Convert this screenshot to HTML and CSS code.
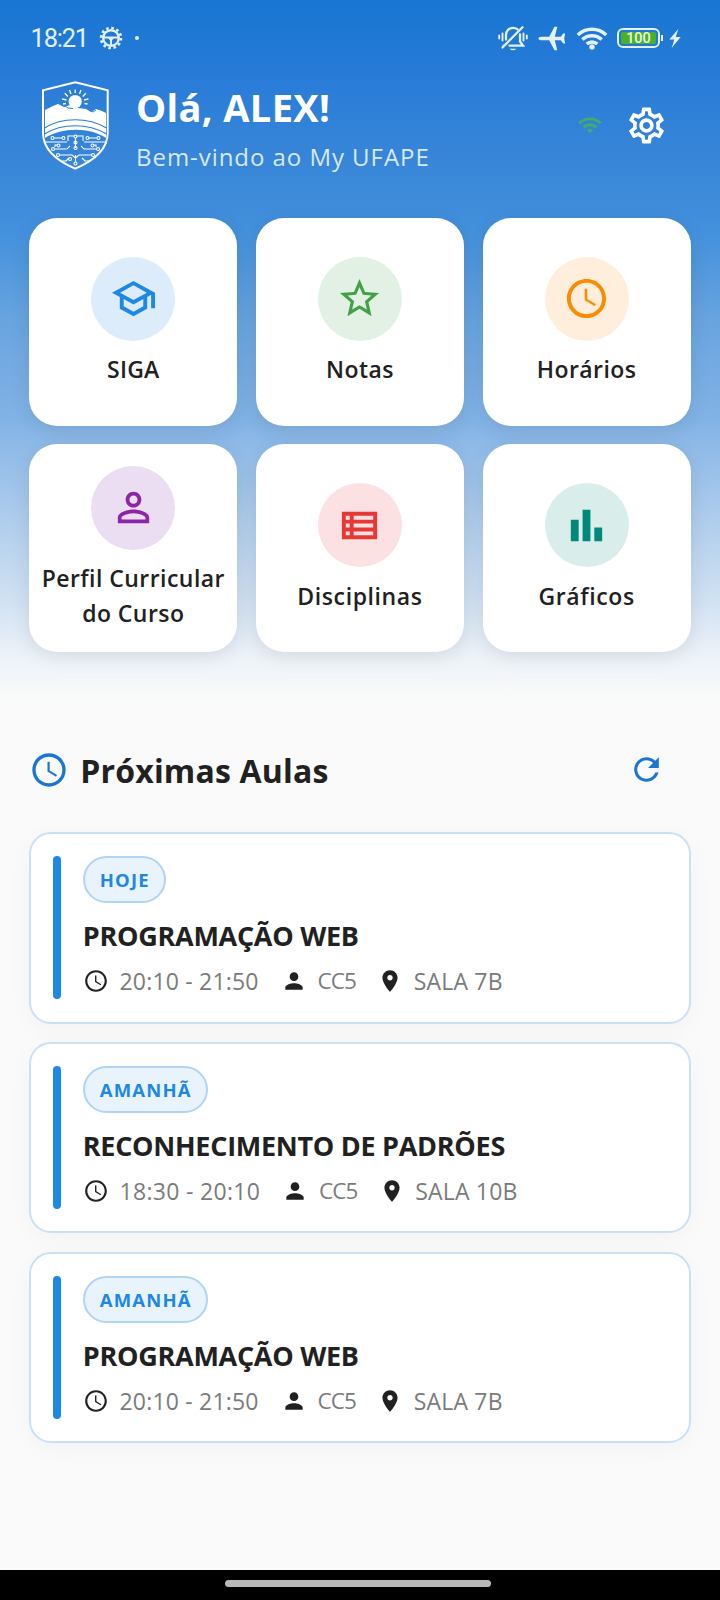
FILE: index.html
```
<!DOCTYPE html>
<html lang="pt-BR">
<head>
<meta charset="utf-8">
<title>My UFAPE</title>
<link rel="stylesheet" href="styles.css">
</head>
<body>
<svg class="defs" aria-hidden="true">
  <symbol id="i-clock" viewBox="0 0 24 24"><path d="M11.99 2C6.47 2 2 6.48 2 12s4.47 10 9.99 10C17.52 22 22 17.52 22 12S17.52 2 11.99 2zM12 20c-4.42 0-8-3.58-8-8s3.580-8 8-8 8 3.580 8 8-3.580 8-8 8zM12.400 7H11.100v5.900l5.100 3.100.65-1.050-4.450-2.650z"/></symbol>
  <symbol id="i-person" viewBox="0 0 24 24"><path d="M12 12c2.21 0 4-1.79 4-4s-1.79-4-4-4-4 1.79-4 4 1.79 4 4 4zm0 2c-2.67 0-8 1.34-8 4v2h16v-2c0-2.66-5.33-4-8-4z"/></symbol>
  <symbol id="i-place" viewBox="0 0 24 24"><path d="M12 2C8.13 2 5 5.13 5 9c0 5.25 7 13 7 13s7-7.75 7-13c0-3.87-3.13-7-7-7zm0 9.5c-1.38 0-2.5-1.12-2.5-2.5s1.12-2.5 2.5-2.5 2.5 1.12 2.5 2.5-1.12 2.5-2.5 2.5z"/></symbol>
</svg>
<div class="screen">
  <div class="hero">
    <div class="status">
      <span class="time">18:21</span>
      <svg class="s-cog" viewBox="0 0 24 24"><circle cx="12" cy="12" r="7.8" fill="none" stroke="currentColor" stroke-width="2.400"/><circle cx="12" cy="12" r="10" fill="none" stroke="currentColor" stroke-width="2.600" stroke-dasharray="2.600 2.636"/><path d="M4.5 11.400h15M12 12v8" stroke="currentColor" stroke-width="2" fill="none"/><path d="M9 12h6L12 15.500z" fill="currentColor"/></svg>
      <span class="dot"></span>
      <span class="grow"></span>
      <svg class="s-bell" viewBox="0 0 30 26" fill="none" stroke="currentColor" stroke-width="2.300" stroke-linecap="round"><path d="M8 14.500V10c0-4 3-7.200 7-7.200 1.800 0 3.200.5 4.300 1.400M22 9.500v7l3 4.200H11.500M5.500 20.700h.6M4.500 22.500L24.500 2.300"/><path d="M11.500 23.700q3.500 3.200 7 0z" fill="currentColor" stroke="none"/><path d="M1.200 10.500v3M4.500 8.500v7M25.500 8.500v7M28.800 10.500v3" stroke-width="1.900"/></svg>
      <svg class="s-plane" viewBox="0 0 28 25" fill="currentColor"><path d="M.5 12.500c0-1 1-1.700 2.500-1.700h8.200L16.500.8h2.800l-2.500 10h6L25.200 7.500h2l-1 5 1 5h-2l-2.400-3.300h-6l2.500 10h-2.800L11.200 14.200H3c-1.500 0-2.500-.7-2.500-1.700z"/></svg>
      <svg class="s-wifi" viewBox="0 0 32 24" fill="none" stroke="currentColor" stroke-width="3.500"><path d="M1.800 9a20.500 20.500 0 0 1 28.400 0M6.300 13.600a14 14 0 0 1 19.400 0M10.700 18a7.800 7.800 0 0 1 10.600 0"/><circle cx="16" cy="21" r="2.700" fill="currentColor" stroke="none"/></svg>
      <span class="battery"><span class="level">100</span></span>
      <svg class="s-bolt" viewBox="0 0 12 20" fill="currentColor"><path d="M9.500 0L0 11h5.200L2.500 20 12 8.500H6.800z"/></svg>
    </div>
    <header class="header">
      <svg class="logo" viewBox="0 0 67 89" fill="none" stroke="#fff">
        <path d="M33.200 1.200L65.700 9.300V52C65.700 70 50 80.500 33.200 87.700 16.500 80.500 1 70 1 52V9.300z" stroke-width="2"/>
        <path d="M3 29l8-4 5-2 6 3 6-2 8 3 8 1 5 3 5-3 6 2 4 2v25C48 46 20 46 3 57z" fill="#fff" stroke="none"/>
        <circle cx="33.200" cy="20.500" r="6.600" fill="#fff" stroke="none"/>
        <path d="M33.200 12V8.500M29 13l-1.500-4M37.500 13l1.500-4M25.800 15.500l-3-3.200M40.800 15.500l3-3.200M24.500 19l-4.500-1.200M42 19l4.500-1.200M24 22.500l-3 .5M42.500 22.500l3 .5" stroke-width="1.300"/>
        <path d="M2.500 47C20 36 46 36 64.500 47M2.500 53C20 42 46 42 64.500 53" stroke="#2c7fd8" stroke-width="1.200"/>
        <path d="M22 24l4 3 5 .5M47 29l4 2 3-2" stroke="#2c7fd8" stroke-width="1"/>
        <g stroke-width="1.100"><path d="M12 57h8M47 57h8M26 60v-5h6M41 60v-5h-7M3 61h22M42 61h22M33.500 57v10M13 66v-2h2M54 66v-2h-2M13 68h12l3-3M54 68H42l-3-3M18 74h12l3.500 3M49 74H37l-3.500 3M20 80h4l3-3M47 80h-4l-3-3M33.500 74v7"/><circle cx="10.500" cy="57" r="1.500"/><circle cx="21.500" cy="57" r="1.500"/><circle cx="45.500" cy="57" r="1.500"/><circle cx="56.500" cy="57" r="1.500"/><circle cx="33.500" cy="55.500" r="1.500"/><circle cx="33.500" cy="61.500" r="1.500"/><circle cx="33.500" cy="67" r="1.500"/><circle cx="16.500" cy="64.500" r="1.500"/><circle cx="50.500" cy="64.500" r="1.500"/><circle cx="11" cy="68" r="1.500"/><circle cx="56" cy="68" r="1.500"/><circle cx="16" cy="74" r="1.500"/><circle cx="51" cy="74" r="1.500"/><circle cx="28" cy="78" r="1.500"/><circle cx="33.500" cy="82.500" r="1.500"/></g>
      </svg>
      <div class="greet">
        <h1 class="hello">Olá, ALEX!</h1>
        <p class="welcome">Bem-vindo ao My UFAPE</p>
      </div>
      <svg class="online" viewBox="0 0 24 17" fill="none" stroke="#43ab6c" stroke-width="2.900"><path d="M1.200 6.300a15.500 15.500 0 0 1 21.600 0M5.500 10.400a9.400 9.400 0 0 1 13 0"/><path d="M8.800 13.200a4.700 4.700 0 0 1 6.400 0L12 16.600z" fill="#43ab6c" stroke="none"/></svg>
      <svg class="gear" viewBox="0 0 24 24" fill="#fff"><path d="M19.430 12.980c.04-.32.07-.64.07-.98 0-.34-.03-.66-.07-.98l2.110-1.650c.19-.15.24-.42.12-.64l-2-3.460c-.09-.16-.26-.25-.44-.25-.06 0-.12.01-.17.03l-2.490 1c-.52-.4-1.080-.73-1.690-.98l-.38-2.650C14.460 2.180 14.250 2 14 2h-4c-.25 0-.46.18-.49.42l-.38 2.650c-.61.25-1.170.59-1.690.98l-2.490-1c-.06-.02-.12-.03-.18-.03-.17 0-.34.09-.43.25l-2 3.460c-.13.22-.07.49.12.64l2.110 1.650c-.04.32-.07.65-.07.98 0 .33.03.66.07.98l-2.110 1.650c-.19.15-.24.42-.12.64l2 3.460c.09.16.26.25.44.25.06 0 .12-.01.17-.03l2.490-1c.52.4 1.080.73 1.690.98l.38 2.650c.03.24.24.42.49.42h4c.25 0 .46-.18.49-.42l.38-2.650c.61-.25 1.170-.59 1.690-.98l2.490 1c.06.02.12.03.18.03.17 0 .34-.09.43-.25l2-3.460c.12-.22.07-.49-.12-.64l-2.110-1.650zm-1.980-1.710c.04.31.05.52.05.73 0 .21-.02.43-.05.73l-.14 1.130.89.7 1.080.84-.7 1.210-1.270-.51-1.040-.42-.9.68c-.43.32-.84.56-1.250.73l-1.060.43-.16 1.130-.2 1.350h-1.400l-.19-1.350-.16-1.130-1.060-.43c-.43-.18-.83-.41-1.230-.71l-.91-.7-1.060.43-1.270.51-.7-1.210 1.080-.84.89-.7-.14-1.130c-.03-.31-.05-.54-.05-.74s.02-.43.05-.73l.14-1.130-.89-.7-1.080-.84.7-1.210 1.270.51 1.040.42.9-.68c.43-.32.84-.56 1.250-.73l1.060-.43.16-1.130.2-1.350h1.390l.19 1.350.16 1.130 1.060.43c.43.18.83.41 1.230.71l.91.7 1.060-.43 1.270-.51.7 1.210-1.070.85-.89.7.14 1.130zM12 8c-2.210 0-4 1.790-4 4s1.790 4 4 4 4-1.790 4-4-1.790-4-4-4zm0 6c-1.100 0-2-.9-2-2s.9-2 2-2 2 .9 2 2-.9 2-2 2z"/></svg>
    </header>
    <nav class="grid">
      <a class="tile blue"><span class="disc"><svg viewBox="0 0 24 24"><path d="M12 3L1 9l4 2.180v6L12 21l7-3.820v-6l2-1.090V17h2V9L12 3zm6.820 6L12 12.720 5.180 9 12 5.280 18.820 9zM17 15.990l-5 2.730-5-2.730v-3.720L12 15l5-2.730v3.720z"/></svg></span><span class="label">SIGA</span></a>
      <a class="tile green"><span class="disc"><svg viewBox="0 0 24 24"><path d="M22 9.240l-7.190-.62L12 2 9.190 8.630 2 9.240l5.460 4.730L5.820 21 12 17.270 18.180 21l-1.630-7.030L22 9.240zM12 15.400l-3.760 2.270 1-4.280-3.320-2.880 4.380-.38L12 6.100l1.710 4.040 4.380.38-3.320 2.880 1 4.280L12 15.400z"/></svg></span><span class="label">Notas</span></a>
      <a class="tile orange"><span class="disc"><svg><use href="#i-clock"/></svg></span><span class="label">Horários</span></a>
      <a class="tile purple"><span class="disc"><svg viewBox="0 0 24 24"><path d="M12 5.900c1.160 0 2.100.94 2.100 2.100s-.94 2.100-2.100 2.100S9.900 9.160 9.900 8s.94-2.100 2.100-2.100m0 9c2.970 0 6.100 1.460 6.100 2.100v1.100H5.900V17c0-.64 3.130-2.100 6.100-2.100M12 4C9.790 4 8 5.790 8 8s1.790 4 4 4 4-1.790 4-4-1.790-4-4-4zm0 9c-2.670 0-8 1.340-8 4v3h16v-3c0-2.660-5.330-4-8-4z"/></svg></span><span class="label">Perfil Curricular<br>do Curso</span></a>
      <a class="tile red"><span class="disc"><svg viewBox="0 0 24 24"><path fill-rule="evenodd" d="M3 5h18v14H3zM5 7v2h2V7zM9 7v2h10V7zM5 11v2h2v-2zM9 11v2h10v-2zM5 15v2h2v-2zM9 15v2h10v-2z"/></svg></span><span class="label">Disciplinas</span></a>
      <a class="tile teal"><span class="disc"><svg viewBox="0 0 24 24"><path d="M4 9h4v11H4zM16 13h4v7h-4zM10 4h4v16h-4z"/></svg></span><span class="label">Gráficos</span></a>
    </nav>
  </div>
  <main class="classes">
    <div class="section">
      <svg class="sec-clock"><use href="#i-clock"/></svg>
      <h2 class="sec-title">Próximas Aulas</h2>
      <svg class="refresh" viewBox="0 0 24 24"><path d="M17.650 6.350C16.200 4.900 14.210 4 12 4c-4.420 0-7.990 3.580-7.990 8s3.570 8 7.990 8c3.730 0 6.840-2.550 7.730-6h-2.080c-.82 2.330-3.040 4-5.650 4-3.310 0-6-2.690-6-6s2.690-6 6-6c1.660 0 3.140.69 4.220 1.780L13 11h7V4l-2.350 2.350z"/></svg>
    </div>
    <article class="card">
      <span class="bar"></span>
      <div class="info">
        <span class="pill">HOJE</span>
        <h3 class="name">PROGRAMAÇÃO WEB</h3>
        <div class="meta"><span class="item"><svg><use href="#i-clock"/></svg><span class="t-time">20:10 - 21:50</span></span><span class="item"><svg><use href="#i-person"/></svg><span class="t-group">CC5</span></span><span class="item"><svg><use href="#i-place"/></svg><span class="t-room">SALA 7B</span></span></div>
      </div>
    </article>
    <article class="card">
      <span class="bar"></span>
      <div class="info">
        <span class="pill">AMANHÃ</span>
        <h3 class="name">RECONHECIMENTO DE PADRÕES</h3>
        <div class="meta"><span class="item"><svg><use href="#i-clock"/></svg><span class="t-time wide">18:30 - 20:10</span></span><span class="item"><svg><use href="#i-person"/></svg><span class="t-group">CC5</span></span><span class="item"><svg><use href="#i-place"/></svg><span class="t-room">SALA 10B</span></span></div>
      </div>
    </article>
    <article class="card">
      <span class="bar"></span>
      <div class="info">
        <span class="pill">AMANHÃ</span>
        <h3 class="name">PROGRAMAÇÃO WEB</h3>
        <div class="meta"><span class="item"><svg><use href="#i-clock"/></svg><span class="t-time">20:10 - 21:50</span></span><span class="item"><svg><use href="#i-person"/></svg><span class="t-group">CC5</span></span><span class="item"><svg><use href="#i-place"/></svg><span class="t-room">SALA 7B</span></span></div>
      </div>
    </article>
  </main>
  <div class="navbar"><span class="handle"></span></div>
</div>
</body>
</html>
```
FILE: styles.css
```
* { box-sizing: border-box; margin: 0; padding: 0; }
body { font-family: "Open Sans", "Noto Sans", sans-serif; color: #212121; background: #fafafa; }
svg { display: block; flex: none; }
.defs { width: 0; height: 0; position: absolute; }
.screen { width: 720px; height: 1600px; display: flex; flex-direction: column; overflow: hidden; background: #fafafa; }

.hero { height: 701px; flex: none; background: linear-gradient(#1976d2 0, #1b77d3 20px, #297cd8 80px, #3987d8 170px, #4390dc 230px, #68a4df 320px, #82b3e6 420px, #a9c9eb 505px, #cfe0f2 597px, #eef3f9 660px, #fafafa 701px); }
.status { height: 76px; padding: 0 39px 0 30.500px; display: flex; align-items: center; color: #e4f1fd; }
.time { font-family: Roboto, sans-serif; font-size: 25.500px; letter-spacing: -1.200px; width: 68.500px; line-height: 76px; }
.s-cog { width: 24px; height: 24px; }
.dot { width: 4px; height: 4px; border-radius: 50%; background: currentColor; margin-left: 12px; }
.grow { flex: 1; }
.s-bell { width: 30px; height: 26px; margin-right: 10px; }
.s-plane { width: 28px; height: 25px; margin-right: 10px; }
.s-wifi { width: 32px; height: 24px; margin-right: 9px; }
.battery { width: 43px; height: 20px; border: 2px solid #e4f1fd; border-radius: 6px; padding: 2px; position: relative; display: flex; }
.battery::after { content: ""; position: absolute; right: -5px; top: 5px; width: 2px; height: 6px; background: #e4f1fd; }
.level { flex: 1; background: #4bb02c; border-radius: 2px; font: 500 14.500px/13px Roboto, sans-serif; text-align: center; color: #e8f8e8; }
.s-bolt { width: 12px; height: 19px; margin-left: 9px; }

.header { height: 141.700px; padding: 4.500px 52px 0 42px; display: flex; align-items: flex-start; }
.logo { width: 67px; height: 89px; }
.greet { flex: 1; padding-left: 27px; white-space: nowrap; }
.hello { font-size: 38px; line-height: 46px; font-weight: 700; color: #fff; margin-top: 3px; letter-spacing: .35px; }
.welcome { font-size: 24px; line-height: 34px; color: #d6e8fa; margin-top: 10px; letter-spacing: .95px; }
.online { width: 24px; height: 17px; margin: 36px 23px 0 0; }
.gear { width: 43px; height: 43px; margin-top: 23.500px; }

.grid { padding: 0 29.300px; display: grid; grid-template-columns: repeat(3, 208px); gap: 18.670px; }
.tile { height: 208px; border-radius: 28px; background: #fff; display: flex; flex-direction: column; align-items: center; justify-content: center; gap: 11px; box-shadow: 0 5px 19px rgba(0, 0, 0, .09); }
.disc { width: 84px; height: 84px; border-radius: 50%; display: flex; align-items: center; justify-content: center; }
.disc svg { width: 47px; height: 47px; fill: currentColor; }
.label { font-size: 23px; line-height: 35px; font-weight: 600; color: #212121; text-align: center; letter-spacing: .45px; white-space: nowrap; }
.blue .label { letter-spacing: .2px; }
.red .label, .teal .label { letter-spacing: .6px; position: relative; top: .5px; }
.blue .disc { background: #ddecfb; color: #1e88e5; }
.green .disc { background: #e2f1e4; color: #43a047; }
.orange .disc { background: #ffeedb; color: #fb8c00; }
.purple .disc { background: #ecdef2; color: #8e24aa; }
.red .disc { background: #fce1e2; color: #e53935; }
.teal .disc { background: #d9edea; color: #00897b; }

.classes { flex: 1; padding: 48.700px 29.300px 0; display: flex; flex-direction: column; gap: 18.670px; }
.section { height: 63.900px; display: flex; align-items: flex-start; }
.sec-clock { width: 40px; height: 40px; fill: #1976d2; }
.sec-title { flex: 1; font-size: 32px; line-height: 40px; font-weight: 700; letter-spacing: .17px; padding: 1px 0 0 11px; white-space: nowrap; }
.refresh { width: 37px; height: 37px; margin: 1px 26px 0 0; fill: #1976d2; }
.card { height: 191.300px; flex: none; padding: 22px; border: 2px solid #cae1f5; border-radius: 22px; background: #fff; display: flex; box-shadow: 0 5px 24px rgba(0, 0, 0, .035); }
.bar { width: 7.500px; height: 143px; border-radius: 4px; background: #1e88e5; }
.info { padding-left: 22px; white-space: nowrap; }
.pill { display: block; width: fit-content; height: 47px; border: 2px solid #b0d4f4; border-radius: 24px; background: #e9f3fc; padding: 0 14px 0 15px; font-size: 18.500px; line-height: 43px; font-weight: 700; letter-spacing: 1.150px; color: #1e88e5; }
.name { margin-top: 13px; font-size: 27px; line-height: 40px; font-weight: 700; letter-spacing: -.28px; }
.meta { margin-top: 8px; height: 34px; display: flex; align-items: center; gap: 22px; font-size: 23px; line-height: 34px; color: #7b7b7b; }
.item { display: flex; align-items: center; gap: 10.700px; }
.item svg { width: 26px; height: 26px; fill: #212121; }
.t-time { letter-spacing: .2px; }
.t-time.wide { letter-spacing: .32px; }
.t-group { font-size: 22.500px; letter-spacing: -.9px; margin-right: -1px; }
.t-room { letter-spacing: .2px; }

.navbar { height: 30px; background: #000; display: flex; align-items: center; justify-content: center; padding: 0 4px 3px 0; }
.handle { width: 266px; height: 7px; border-radius: 4px; background: #b8b8b8; }
```
